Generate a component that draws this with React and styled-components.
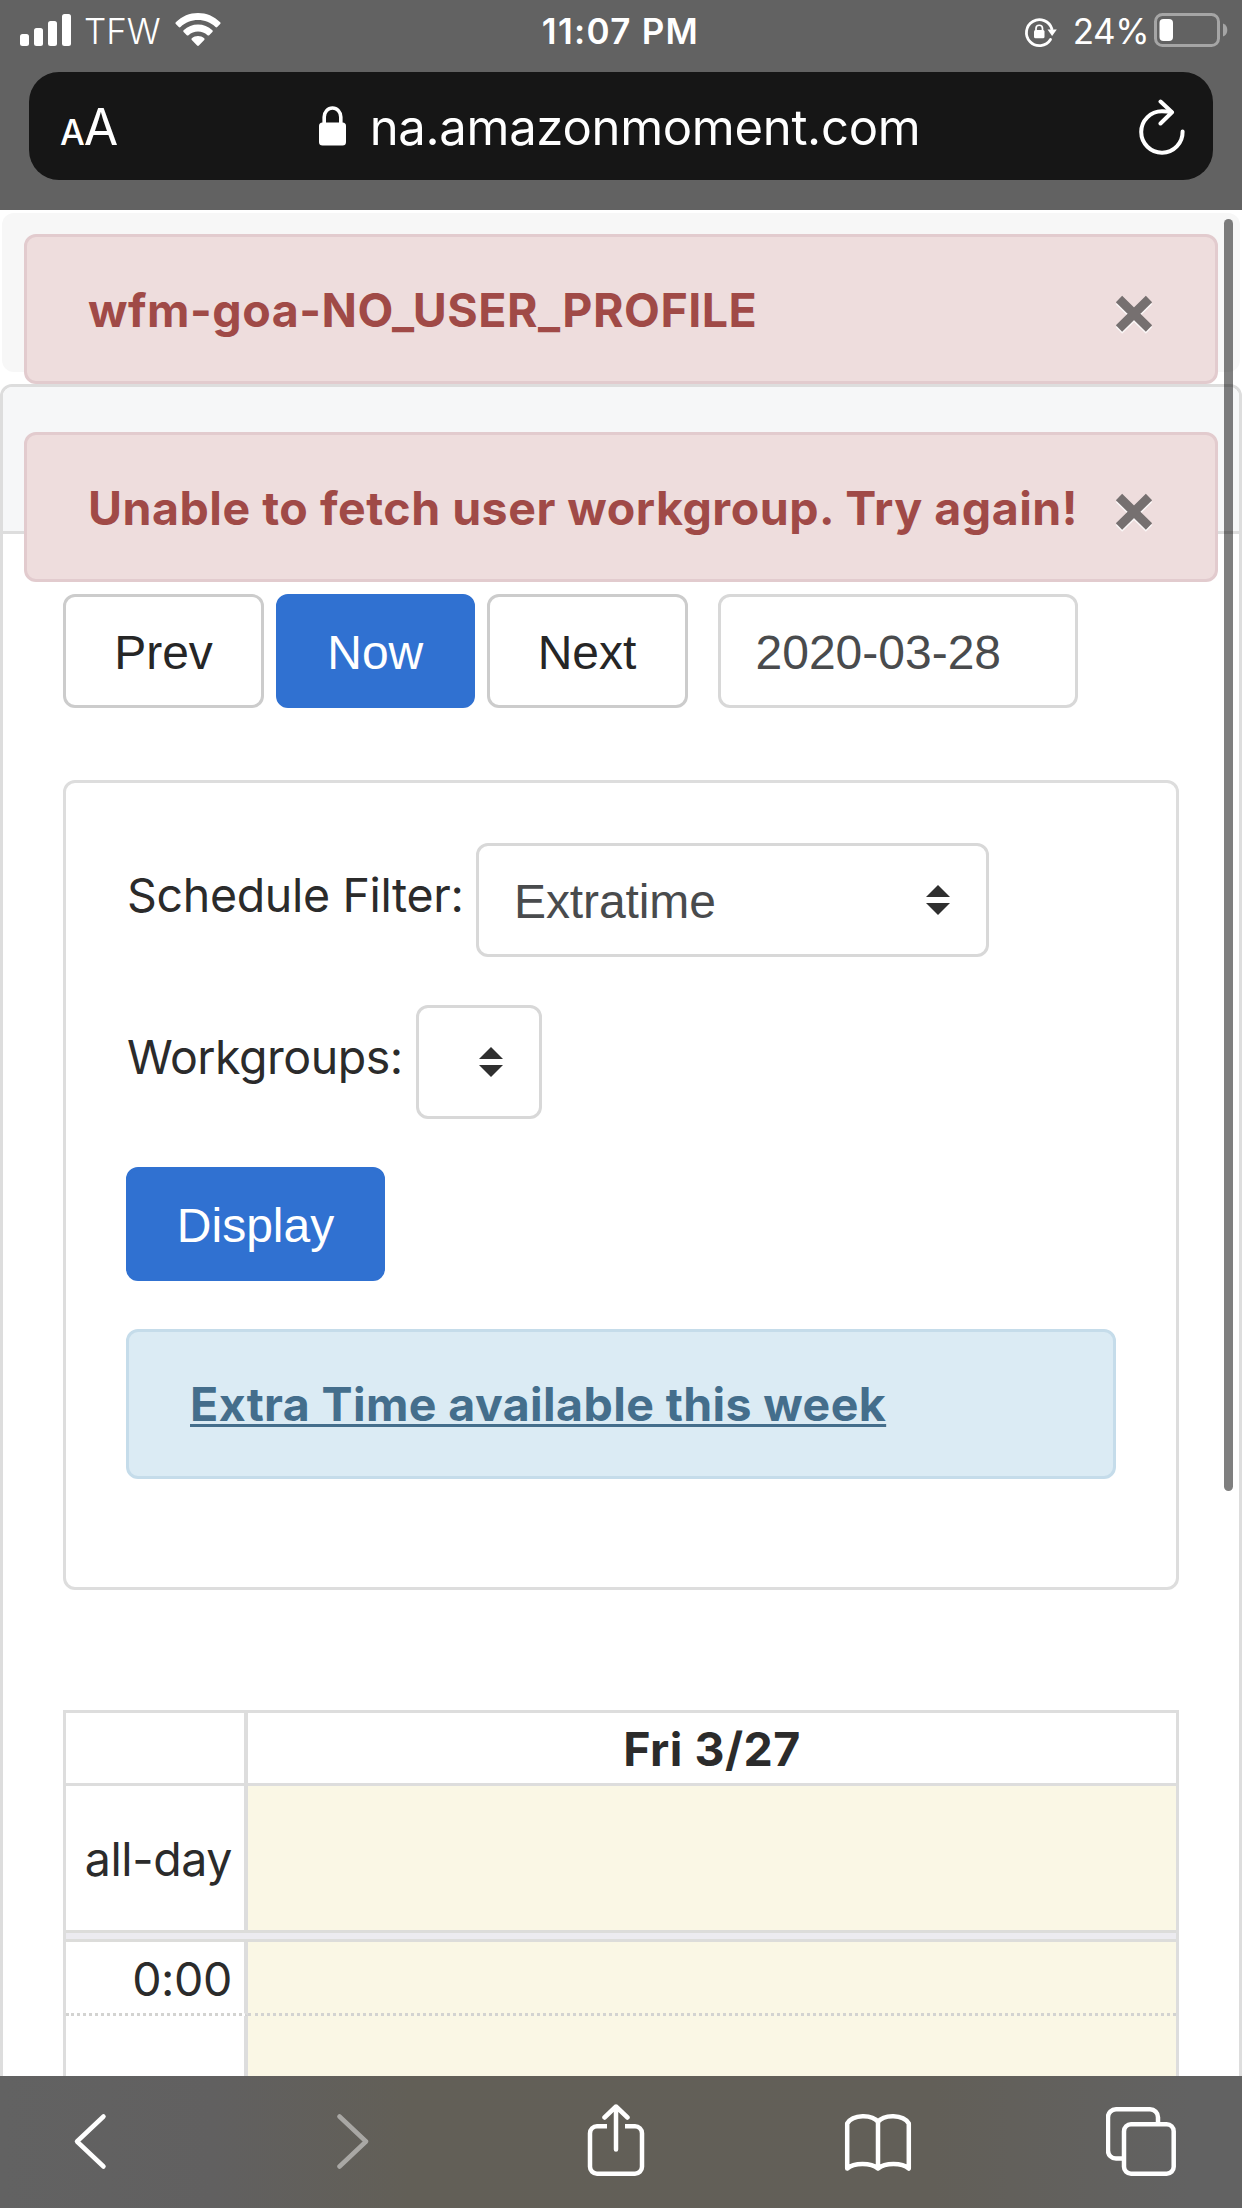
import React from 'react'
import styled, { createGlobalStyle } from 'styled-components'

const GlobalStyle = createGlobalStyle`
  * {
    box-sizing: border-box;
  }

  body {
    margin: 0;
    background-color: #fff;
    font-family: Inter, 'Liberation Sans', sans-serif;
    color: #2b2b2b;
  }
`

const Screen = styled.div`
  display: flex;
  flex-direction: column;
  width: 1242px;
  height: 2208px;
  overflow: hidden;
`

const BrowserHeader = styled.header`
  flex: none;
  height: 210px;
  background-color: #626262;
  color: #fff;
`

const StatusBar = styled.div`
  display: grid;
  grid-template-columns: 1fr auto 1fr;
  height: 72px;
  padding: 0 14px 12px 20px;
`

const StatusGroup = styled.div`
  display: flex;
  align-items: center;
  justify-content: ${({ $end }) => ($end ? 'flex-end' : 'flex-start')};
  height: 60px;

  svg {
    flex: none;
  }
`

const StatusText = styled.span`
  font-size: 35px;
  line-height: 60px;
  padding-top: 1px;
  font-weight: ${({ $weight }) => $weight || 400};
  letter-spacing: ${({ $spacing }) => $spacing || 0};
  margin: ${({ $margin }) => $margin || 0};
  white-space: nowrap;
`

const AddressBar = styled.div`
  display: grid;
  grid-template-columns: 160px 1fr 160px;
  align-items: center;
  height: 108px;
  margin: 0 29px;
  padding: 0 28px 0 31px;
  border-radius: 30px;
  background-color: #161616;
`

const TextSize = styled.div`
  display: flex;
  align-items: baseline;
  padding-top: 6px;
  font-size: 50px;
  line-height: 60px;
  letter-spacing: -1px;

  small {
    font-size: 35px;
    font-weight: 500;
  }
`

const Address = styled.div`
  display: flex;
  align-items: center;
  justify-content: center;
  gap: 24px;
  padding-right: 6px;
  font-size: 49px;
  line-height: 60px;
  letter-spacing: -0.3px;

  span {
    padding-top: 3px;
  }
`

const Reload = styled.div`
  display: flex;
  justify-content: flex-end;
  padding-top: 2px;
`

const Page = styled.main`
  position: relative;
  flex: 1;
  min-height: 0;
  padding-top: 3px;
  overflow: hidden;
`

const Navbar = styled.div`
  height: 159px;
  margin: 0 2px 12px;
  border-radius: 12px;
  background-color: #f7f7f7;
`

const Panel = styled.section`
  height: 1800px;
  border: 3px solid #ddd;
  border-radius: 12px 12px 0 0;
  overflow: hidden;
`

const PanelHeading = styled.div`
  height: 147px;
  border-bottom: 3px solid #ddd;
  background-color: #f6f7f8;
`

const PanelBody = styled.div`
  padding: 60px 60px 0;
`

const AlertStack = styled.div`
  position: absolute;
  top: 24px;
  left: 24px;
  right: 24px;
  display: flex;
  flex-direction: column;
  gap: 48px;
`

const Alert = styled.div`
  display: flex;
  align-items: center;
  justify-content: space-between;
  height: 150px;
  padding: 2px 61px 0 61px;
  border: 3px solid #e2cbce;
  border-radius: 12px;
  background-color: #eedddd;
  color: #a04a47;
  font-size: 46.5px;
  font-weight: 700;
  letter-spacing: 0.52px;
  white-space: nowrap;
`

const CloseButton = styled.button`
  display: flex;
  padding: 9px 0 0;
  border: 0;
  background: none;
`

const Toolbar = styled.div`
  display: flex;
  gap: 12px;
  margin-bottom: 72px;
`

const Button = styled.button`
  width: ${({ $width }) => $width};
  height: 114px;
  padding: 3px 0 0;
  border: 3px solid ${({ $primary }) => ($primary ? '#3071d1' : '#ccc')};
  border-radius: 12px;
  background-color: ${({ $primary }) => ($primary ? '#3071d1' : '#fff')};
  color: ${({ $primary }) => ($primary ? '#fff' : '#262626')};
  font: 48px 'Liberation Sans', sans-serif;
`

const DateInput = styled.input`
  width: 360px;
  height: 114px;
  margin-left: 18px;
  padding: 2px 35px 0;
  border: 3px solid #d8d8d8;
  border-radius: 12px;
  outline: none;
  color: #494b4d;
  font: 48px 'Liberation Sans', sans-serif;
`

const FilterBox = styled.div`
  height: 810px;
  padding: 60px;
  border: 3px solid #ddd;
  border-radius: 12px;
  margin-bottom: 120px;
`

const FilterRow = styled.div`
  display: flex;
  align-items: center;
  height: 114px;
  margin-bottom: 48px;
`

const Label = styled.label`
  width: ${({ $width }) => $width};
  margin-top: -10px;
  padding-left: 1px;
  font-size: 46.5px;
  line-height: 60px;
  letter-spacing: ${({ $spacing }) => $spacing || 0};
  white-space: nowrap;
`

const Select = styled.div`
  display: flex;
  align-items: center;
  justify-content: space-between;
  width: ${({ $width }) => $width};
  height: 114px;
  padding: 0 36px 0 35px;
  border: 3px solid #d8d8d8;
  border-radius: 12px;
  color: #494b4d;
  font: 48px 'Liberation Sans', sans-serif;

  span {
    padding-top: 3px;
    letter-spacing: -0.1px;
  }
`

const InfoBox = styled.div`
  height: 150px;
  padding: 39px 61px;
  border: 3px solid #c5dcea;
  border-radius: 12px;
  background-color: #dbebf4;

  a {
    color: #446e8c;
    font-size: 46.5px;
    font-weight: 700;
    line-height: 66px;
    letter-spacing: 0.39px;
    text-decoration: underline;
    text-decoration-thickness: 3px;
    text-underline-offset: 3px;
    text-decoration-skip-ink: none;
    white-space: nowrap;
  }
`

const Calendar = styled.div`
  display: grid;
  grid-template-columns: 182px 1fr;
  grid-template-rows: 73px 144px 12px 74px 80px;
  border: 3px solid #ddd;
  border-bottom: 0;
`

const AxisCell = styled.div`
  display: flex;
  align-items: center;
  justify-content: flex-end;
  padding: 2px 12px 0 0;
  border-right: 4px solid #ddd;
  border-bottom: ${({ $line }) => $line || 0};
  font-size: 46.5px;
  line-height: 60px;
  letter-spacing: -0.4px;
  white-space: nowrap;
`

const DayCell = styled.div`
  display: flex;
  align-items: center;
  justify-content: center;
  padding-top: 1px;
  background-color: ${({ $today }) => ($today ? '#faf7e5' : '#fff')};
  border-bottom: ${({ $line }) => $line || 0};
  font-size: 46.5px;
  font-weight: 700;
  letter-spacing: 0.5px;
`

const Divider = styled.div`
  grid-column: 1 / -1;
  height: 12px;
  border: solid #dcdcda;
  border-width: 3px 0;
  background-color: #ecebf0;
`

const ScrollThumb = styled.div`
  position: absolute;
  top: 9px;
  right: 9px;
  width: 9px;
  height: 1272px;
  border-radius: 5px;
  background-color: rgba(0, 0, 0, 0.5);
`

const BottomBar = styled.nav`
  flex: none;
  display: flex;
  align-items: center;
  justify-content: space-between;
  height: 132px;
  padding: 0 66px 0 55px;
  background: linear-gradient(90deg, #626262 0%, #616060 17%, #625f57 33%, #625f58 75%, #626262 96%);
`

const BottomButton = styled.div`
  display: flex;
  justify-content: center;
  width: 70px;
  opacity: ${({ $disabled }) => ($disabled ? 0.45 : 1)};
`

const lightLine = '3px solid #ddd'
const dottedLine = '3px dotted #d3d3d1'

const SignalIcon = () => (
  <svg width="51" height="60" viewBox="0 0 51 60" fill="#fff">
    <rect x="0" y="34" width="9" height="12" rx="2.5" />
    <rect x="14" y="28" width="9" height="18" rx="2.5" />
    <rect x="28" y="21" width="9" height="25" rx="2.5" />
    <rect x="42" y="14" width="9" height="32" rx="2.5" />
  </svg>
)

const WifiIcon = () => (
  <svg width="46" height="60" viewBox="0 0 46 60" fill="#fff">
    <path d="M.8 22.3C7 16.200 14.600 13 23 13s16 3.200 22.200 9.300c.5.500.5 1.200 0 1.700l-3 3c-.5.500-1.200.5-1.700 0C35.600 22.300 29.600 20 23 20S10.400 22.300 5.500 27c-.5.500-1.200.5-1.700 0l-3-3c-.5-.5-.5-1.200 0-1.700z" />
    <path d="M8.600 30.300C12.700 26.500 17.600 24.500 23 24.500s10.300 2 14.400 5.800c.5.500.5 1.200 0 1.700l-3.200 3.200c-.5.500-1.200.5-1.700 0C29.800 32.800 26.600 31.500 23 31.500s-6.800 1.300-9.500 3.700c-.5.500-1.200.5-1.700 0L8.600 32c-.5-.5-.5-1.200 0-1.700z" />
    <path d="M16.800 38.300c3.500-3.200 8.900-3.200 12.400 0 .5.500.5 1.200 0 1.700l-5.300 5.500c-.5.500-1.300.5-1.800 0L16.800 40c-.5-.5-.5-1.200 0-1.700z" />
  </svg>
)

const RotationLockIcon = () => (
  <svg width="34" height="60" viewBox="0 0 34 60" fill="none">
    <path d="M26.500 39.500A13 13 0 1 1 27.900 29" stroke="#fff" strokeWidth="2.800" strokeLinecap="round" />
    <path d="M23.500 29.500h9.300l-4.700 6.500z" fill="#fff" />
    <rect x="10" y="30" width="10.500" height="8.300" rx="1.500" fill="#fff" />
    <path d="M12 31v-2.500a3.250 3.250 0 0 1 6.500 0V31" stroke="#fff" strokeWidth="1.700" />
  </svg>
)

const BatteryIcon = () => (
  <svg width="74" height="60" viewBox="0 0 74 60" fill="none">
    <rect x="1.500" y="14.500" width="63" height="31" rx="7" stroke="#a5a5a5" strokeWidth="3" />
    <path d="M69 23.500c3 1 4.300 3.500 4.300 6.500s-1.300 5.500-4.300 6.500z" fill="#a5a5a5" />
    <rect x="5.500" y="19" width="13.500" height="22" rx="4" fill="#fff" />
  </svg>
)

const LockIcon = () => (
  <svg width="27" height="40" viewBox="0 0 27 40" fill="none">
    <rect x="0" y="16.500" width="27" height="23" rx="3.500" fill="#fff" />
    <path d="M5.200 18v-7a8.300 9 0 0 1 16.600 0v7" stroke="#fff" strokeWidth="3.600" />
  </svg>
)

const ReloadIcon = () => (
  <svg width="46" height="56" viewBox="0 0 46 56" fill="none" stroke="#fff" strokeWidth="4" strokeLinecap="round" strokeLinejoin="round">
    <path d="M43.600 32.500A20.700 20.700 0 1 1 23 12.300c3.500 0 6 .2 9.500.9" />
    <path d="M21.500 2.500L33 13.300 21.500 24.500" />
  </svg>
)

const CrossIcon = () => (
  <svg width="39" height="39" viewBox="0 0 39 39">
    <path d="M4 6L34 35.500M34 6L4 35.500" stroke="#fff" strokeOpacity="0.800" strokeWidth="9" />
    <path d="M4 4L34 33.500M34 4L4 33.500" stroke="#767070" strokeWidth="9" />
  </svg>
)

const SortIcon = () => (
  <svg width="24" height="30" viewBox="0 0 24 30" fill="#2f2f2f">
    <path d="M12 0l12 12H0z" />
    <path d="M0 18h24L12 30z" />
  </svg>
)

const BottomIcon = ({ width, disabled, children }) => (
  <BottomButton $disabled={disabled}>
    <svg
      width={width}
      height="76"
      viewBox={`0 0 ${width} 76`}
      fill="none"
      stroke="#fff"
      strokeWidth="4.500"
      strokeLinecap="round"
      strokeLinejoin="round"
    >
      {children}
    </svg>
  </BottomButton>
)

const ErrorAlert = ({ children }) => (
  <Alert>
    <span>{children}</span>
    <CloseButton aria-label="Close">
      <CrossIcon />
    </CloseButton>
  </Alert>
)

const App = () => {
  return (
    <Screen>
      <GlobalStyle />
      <BrowserHeader>
        <StatusBar>
          <StatusGroup>
            <SignalIcon />
            <StatusText $margin="0 14px 0 13px" $weight={300}>TFW</StatusText>
            <WifiIcon />
          </StatusGroup>
          <StatusText $weight={600} $spacing="1.3px" $margin="0 7px 0 0">11:07 PM</StatusText>
          <StatusGroup $end>
            <RotationLockIcon />
            <StatusText $margin="0 5px 0 15px" $spacing="-0.5px">24%</StatusText>
            <BatteryIcon />
          </StatusGroup>
        </StatusBar>
        <AddressBar>
          <TextSize>
            <small>A</small>A
          </TextSize>
          <Address>
            <LockIcon />
            <span>na.amazonmoment.com</span>
          </Address>
          <Reload>
            <ReloadIcon />
          </Reload>
        </AddressBar>
      </BrowserHeader>

      <Page>
        <Navbar />
        <Panel>
          <PanelHeading />
          <PanelBody>
            <Toolbar>
              <Button $width="201px">Prev</Button>
              <Button $width="198.5px" $primary>Now</Button>
              <Button $width="201px">Next</Button>
              <DateInput defaultValue="2020-03-28" />
            </Toolbar>
            <FilterBox>
              <FilterRow>
                <Label $width="350px" $spacing="-0.33px">Schedule Filter:</Label>
                <Select $width="513px">
                  <span>Extratime</span>
                  <SortIcon />
                </Select>
              </FilterRow>
              <FilterRow>
                <Label $width="290px" $spacing="-0.5px">Workgroups:</Label>
                <Select $width="126px">
                  <span />
                  <SortIcon />
                </Select>
              </FilterRow>
              <FilterRow>
                <Button $width="259px" $primary>Display</Button>
              </FilterRow>
              <InfoBox>
                <a href="#extra-time">Extra Time available this week</a>
              </InfoBox>
            </FilterBox>
            <Calendar>
              <AxisCell $line={lightLine} />
              <DayCell $line={lightLine}>Fri 3/27</DayCell>
              <AxisCell>
                <span>all-day</span>
              </AxisCell>
              <DayCell $today />
              <Divider />
              <AxisCell $line={dottedLine}>
                <span>0:00</span>
              </AxisCell>
              <DayCell $today $line={dottedLine} />
              <AxisCell />
              <DayCell $today />
            </Calendar>
          </PanelBody>
        </Panel>
        <AlertStack>
          <ErrorAlert>wfm-goa-NO_USER_PROFILE</ErrorAlert>
          <ErrorAlert>Unable to fetch user workgroup. Try again!</ErrorAlert>
        </AlertStack>
        <ScrollThumb />
      </Page>

      <BottomBar>
        <BottomIcon width={40}>
          <path d="M33.500 12.500L7 37.500l26.500 25" />
        </BottomIcon>
        <BottomIcon width={40} disabled>
          <path d="M6.500 12.500l26.500 25-26.500 25" />
        </BottomIcon>
        <BottomIcon width={58}>
          <path d="M20 22.200h-10a7 7 0 0 0-7 7v33.500a7 7 0 0 0 7 7h38a7 7 0 0 0 7-7V29.200a7 7 0 0 0-7-7h-10" strokeLinecap="butt" />
          <path d="M29 45.500V2.500M17.500 13.500L29 2.500l11.500 11" />
        </BottomIcon>
        <BottomIcon width={70}>
          <path d="M35 64.500V18C29 10.200 10 10.200 4.200 19.500V64.500C11 58.500 28 58.500 35 64.500C42 58.500 59 58.500 65.800 64.500V19.500C60 10.200 41 10.200 35 18" />
        </BottomIcon>
        <BottomIcon width={70}>
          <path d="M17 54.600h-7a8 8 0 0 1-8-8V13.200a8 8 0 0 1 8-8h34a8 8 0 0 1 8 8v6" strokeLinecap="butt" />
          <rect x="18" y="20.200" width="49.700" height="49.500" rx="7" />
        </BottomIcon>
      </BottomBar>
    </Screen>
  )
}

export default App
